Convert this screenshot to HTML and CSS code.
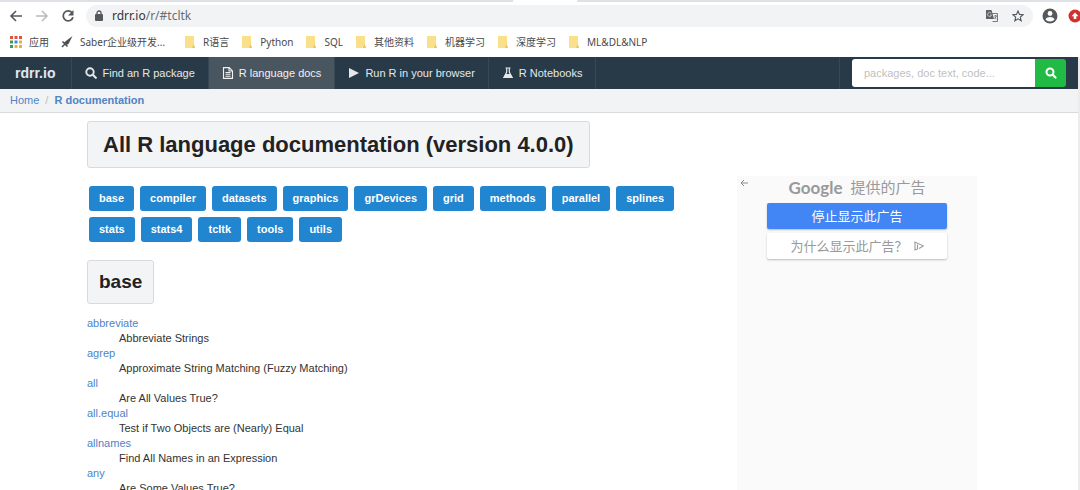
FILE: index.html
```html
<!DOCTYPE html>
<html lang="en">
<head>
<meta charset="utf-8">
<title>All R language documentation</title>
<link rel="stylesheet" href="styles.css">
</head>
<body>
<div class="tabstrip"><span class="tab-active"></span></div>
<div class="toolbar">
  <button class="tool" aria-label="Back"><svg width="16" height="16" viewBox="0 0 16 16"><path d="M14 8H3M8 3L3 8l5 5" fill="none" stroke="#55585c" stroke-width="1.6"/></svg></button>
  <button class="tool" aria-label="Forward"><svg width="16" height="16" viewBox="0 0 16 16"><path d="M2 8h11M8 3l5 5-5 5" fill="none" stroke="#b9bbbe" stroke-width="1.6"/></svg></button>
  <button class="tool" aria-label="Reload"><svg width="16" height="16" viewBox="0 0 16 16"><path d="M12.3 5A5 5 0 1 0 13 9.300" fill="none" stroke="#55585c" stroke-width="1.8"/><path d="M13.500 2v5.500H8z" fill="#55585c"/></svg></button>
  <div class="address">
    <svg width="10" height="12" viewBox="0 0 10 12"><rect x="1" y="4" width="8" height="7" rx="1" fill="#55585c"/><path d="M3 4.500V3a2 2 0 0 1 4 0v1.500" fill="none" stroke="#55585c" stroke-width="1.300"/></svg>
    <span class="url">rdrr.io<span class="path">/r/#tcltk</span></span>
    <svg class="translate" width="12" height="12" viewBox="0 0 12 12"><path d="M5 3.500h6.500v8H6.500" fill="none" stroke="#77797c"/><path d="M0 0h5.500l2.500 9H0z" fill="#5f6368"/><path d="M5.200 3.300A2 2 0 1 0 5.500 5H4" fill="none" stroke="#d5d7da" stroke-width=".8"/><path d="M8 6h3M9.500 5v1M10.500 6L8.500 9M8.700 7.500l1.800 1.500" fill="none" stroke="#66696d" stroke-width=".8"/></svg>
    <svg width="12" height="12" viewBox="0 0 12 12"><path d="M6 1l1.500 3.400 3.600.3-2.800 2.400.9 3.700L6 8.900l-3.200 1.900.9-3.700L.9 4.700l3.600-.3z" fill="none" stroke="#55585c" stroke-width="1.100"/></svg>
  </div>
  <svg class="avatar" width="16" height="16" viewBox="0 0 16 16"><circle cx="8" cy="8" r="7.500" fill="#55585c"/><circle cx="8" cy="5.500" r="2.400" fill="#fff"/><path d="M3.500 11.500c1.600-3.200 7.400-3.200 9 0-2 2.600-7 2.600-9 0z" fill="#fff"/></svg>
  <svg class="update" width="14" height="14" viewBox="0 0 14 14"><circle cx="7" cy="7" r="6.500" fill="#d32f2f"/><path d="M7 3.500l3.500 3.700H8.300V10H5.700V7.200H3.500z" fill="#fff"/></svg>
</div>
<div class="bookmarks">
  <a href="#apps" class="bm apps"><svg width="12" height="12" viewBox="0 0 12 12"><path d="M0 0h3v3H0zM4.500 0h3v3h-3z" fill="#e0533f"/><path d="M9 0h3v3H9z" fill="#e0533f"/><path d="M0 4.500h3v3H0z" fill="#3f9a58"/><path d="M4.500 4.500h3v3h-3z" fill="#4285d8"/><path d="M9 4.500h3v3H9zM4.500 9h3v3h-3zM9 9h3v3H9z" fill="#e7b23b"/><path d="M0 9h3v3H0z" fill="#3f9a58"/></svg>应用</a>
  <a href="#saber" class="bm saber"><svg width="12" height="12" viewBox="0 0 12 12"><path d="M11.500 0L7.500 8 5.500 9 3 6.500z" fill="#4c4f52"/><path d="M1.500 5.500l5 5M4 8l-3 3" stroke="#4c4f52" stroke-width="1.500"/></svg>Saber企业级开发...</a>
  <a href="#r" class="bm"><svg width="12" height="12" viewBox="0 0 12 12"><path d="M1 0h9v9l1 3H1z" fill="#fae08a"/><path d="M9.500 8l1.500 4H8z" fill="#e7c65c"/></svg>R语言</a>
  <a href="#python" class="bm"><svg width="12" height="12" viewBox="0 0 12 12"><path d="M1 0h9v9l1 3H1z" fill="#fae08a"/><path d="M9.500 8l1.500 4H8z" fill="#e7c65c"/></svg>Python</a>
  <a href="#sql" class="bm"><svg width="12" height="12" viewBox="0 0 12 12"><path d="M1 0h9v9l1 3H1z" fill="#fae08a"/><path d="M9.500 8l1.500 4H8z" fill="#e7c65c"/></svg>SQL</a>
  <a href="#other" class="bm"><svg width="12" height="12" viewBox="0 0 12 12"><path d="M1 0h9v9l1 3H1z" fill="#fae08a"/><path d="M9.500 8l1.500 4H8z" fill="#e7c65c"/></svg>其他资料</a>
  <a href="#ml" class="bm"><svg width="12" height="12" viewBox="0 0 12 12"><path d="M1 0h9v9l1 3H1z" fill="#fae08a"/><path d="M9.500 8l1.500 4H8z" fill="#e7c65c"/></svg>机器学习</a>
  <a href="#dl" class="bm"><svg width="12" height="12" viewBox="0 0 12 12"><path d="M1 0h9v9l1 3H1z" fill="#fae08a"/><path d="M9.500 8l1.500 4H8z" fill="#e7c65c"/></svg>深度学习</a>
  <a href="#nlp" class="bm"><svg width="12" height="12" viewBox="0 0 12 12"><path d="M1 0h9v9l1 3H1z" fill="#fae08a"/><path d="M9.500 8l1.500 4H8z" fill="#e7c65c"/></svg>ML&amp;DL&amp;NLP</a>
</div>
<div class="page">
  <nav class="menu">
    <a class="item brand" href="#home">rdrr.io</a>
    <a class="item" href="#find"><svg width="12" height="12" viewBox="0 0 12 12"><circle cx="5" cy="5" r="3.700" fill="none" stroke="currentColor" stroke-width="1.900"/><path d="M7.800 7.800l3 3" stroke="currentColor" stroke-width="2.200" stroke-linecap="round"/></svg>Find an R package</a>
    <a class="item active" href="#docs"><svg width="12" height="12" viewBox="0 0 12 12"><path d="M1.500.6h5.700l3.300 3.300v7.500h-9zM7 .6V4h3.500M3.500 5.500h5M3.500 7.300h5M3.500 9.200h5" fill="none" stroke="currentColor" stroke-width="1.100"/></svg>R language docs</a>
    <a class="item" href="#run"><svg width="12" height="12" viewBox="0 0 12 12"><path d="M1 1l10 5-10 5z" fill="currentColor"/></svg>Run R in your browser</a>
    <a class="item" href="#notebooks"><svg width="12" height="12" viewBox="0 0 12 12"><path d="M3.500 1h5M4.700 1v4L2 10.500h8L7.300 5V1" fill="none" stroke="currentColor" stroke-width="1.200"/><path d="M3.500 7h5l2.500 4H1z" fill="currentColor"/></svg>R Notebooks</a>
    <form class="search">
      <input type="search" aria-label="Search" placeholder="packages, doc text, code...">
      <button type="button" aria-label="Search"><svg width="12" height="12" viewBox="0 0 12 12"><circle cx="5" cy="5" r="3.500" fill="none" stroke="#fff" stroke-width="2"/><path d="M7.800 7.800l2.700 2.700" stroke="#fff" stroke-width="2.200" stroke-linecap="round"/></svg></button>
    </form>
  </nav>
  <div class="crumbs"><a href="#home">Home</a><span>/</span><a class="current" href="#docs">R documentation</a></div>
  <div class="container">
    <main>
      <h1>All R language documentation (version 4.0.0)</h1>
      <div class="tags">
        <a href="#base">base</a><a href="#compiler">compiler</a><a href="#datasets">datasets</a><a href="#graphics">graphics</a><a href="#grDevices">grDevices</a><a href="#grid">grid</a><a href="#methods">methods</a><a href="#parallel">parallel</a><a href="#splines">splines</a><a href="#stats">stats</a><a href="#stats4">stats4</a><a href="#tcltk">tcltk</a><a href="#tools">tools</a><a href="#utils">utils</a>
      </div>
      <h2 id="base">base</h2>
      <dl>
        <dt><a href="#abbreviate">abbreviate</a></dt><dd>Abbreviate Strings</dd>
        <dt><a href="#agrep">agrep</a></dt><dd>Approximate String Matching (Fuzzy Matching)</dd>
        <dt><a href="#all">all</a></dt><dd>Are All Values True?</dd>
        <dt><a href="#all.equal">all.equal</a></dt><dd>Test if Two Objects are (Nearly) Equal</dd>
        <dt><a href="#allnames">allnames</a></dt><dd>Find All Names in an Expression</dd>
        <dt><a href="#any">any</a></dt><dd>Are Some Values True?</dd>
      </dl>
    </main>
    <aside>
      <button class="ad-back" aria-label="Back"><svg width="8" height="8" viewBox="0 0 8 8"><path d="M8 4H1M4 1L1 4l3 3" fill="none" stroke="#8c8c8c"/></svg></button>
      <p class="ad-title"><b>Google</b>提供的广告</p>
      <button class="ad-btn stop">停止显示此广告</button>
      <button class="ad-btn why">为什么显示此广告？<svg width="10" height="10" viewBox="0 0 10 10"><path d="M3.500 8L1 9V1l8.500 4-4.500 2.500M3.500 8V3.500" fill="none" stroke="#999" stroke-width="1.100"/></svg></button>
    </aside>
  </div>
</div>
</body>
</html>
```
FILE: styles.css
```css
* { box-sizing: border-box; }
body {
  margin: 0;
  height: 100vh;
  overflow: hidden;
  display: flex;
  flex-direction: column;
  background: #fff;
  color: #333;
  font: 11px/15px "Liberation Sans", Arial, "Noto Sans CJK SC", sans-serif;
}
a { color: #4f83c4; text-decoration: none; }
button { border: 0; padding: 0; background: none; font: inherit; }
svg { display: block; flex: none; }

.tabstrip { height: 2px; flex: none; background: #dee1e6; padding-left: 47.5%; }
.tab-active { display: block; width: 64px; height: 2px; background: #fff; }
.toolbar { flex: none; height: 28px; display: flex; align-items: center; padding-left: 8px; gap: 10px; }
.address {
  flex: 1;
  height: 22px;
  display: flex;
  align-items: center;
  gap: 8px;
  padding: 0 9px 0 8px;
  border-radius: 11px;
  background: #f1f3f4;
}
.url { flex: 1; color: #333639; font: 12px/16px "Noto Sans", sans-serif; }
.path { color: #6b6e72; }
.translate { margin-right: 6px; }
.avatar { margin-left: -1px; }
.update { margin-right: -2px; }

.bookmarks {
  flex: none;
  height: 27px;
  display: flex;
  align-items: center;
  gap: 12px;
  padding: 0 10px 3px;
  white-space: nowrap;
}
.bm { display: flex; align-items: center; gap: 7px; color: #47494c; font: 10px/14px "Noto Sans", "Noto Sans CJK SC", sans-serif; }
.saber { margin-right: 7px; }

.page { flex: 1; min-height: 0; overflow: hidden; border-right: 2px solid #ececec; }
.menu { display: flex; height: 32px; background: #283a48; }
.item {
  display: flex;
  align-items: center;
  gap: 5px;
  padding: 0 13px;
  border-right: 1px solid #364856;
  color: #e4e8ea;
  font-size: 11px;
  white-space: nowrap;
}
.brand { padding: 0 16px 0 15px; font-size: 14px; font-weight: bold; }
.active { background: #4a565f; color: #f0f2f3; }
.search {
  margin-left: auto;
  display: flex;
  align-items: center;
  padding: 0 12px;
  border-left: 1px solid #364856;
}
.search input {
  width: 183px;
  height: 28px;
  border: 0;
  border-radius: 3px 0 0 3px;
  padding: 0 12px;
  background: #fff;
  font: 11px/15px "Liberation Sans", Arial, sans-serif;
}
.search input::placeholder { color: #bfbfbf; }
.search button {
  width: 31px;
  height: 28px;
  display: flex;
  align-items: center;
  justify-content: center;
  border-radius: 0 3px 3px 0;
  background: #21ba45;
}
.crumbs { display: flex; gap: 6px; padding: 4px 10px; background: #f2f3f5; border-bottom: 1px solid #d9dadc; }
.crumbs span { color: #bbb; }
.current { font-weight: bold; }

.container {
  max-width: 904px;
  margin: 0 auto;
  padding: 8px 14px 0 0;
  display: grid;
  grid-template-columns: minmax(0, 1fr) 240px;
  gap: 56px;
}
h1, h2 {
  width: fit-content;
  margin: 0;
  padding: 9px 11px;
  border: 1px solid #d8dadd;
  border-radius: 3px;
  background: #f3f4f5;
  color: #222;
}
h1 { padding: 9px 15px; font-size: 22px; line-height: 27px; }
h2 { font-size: 19px; line-height: 24px; }
.tags { display: flex; flex-wrap: wrap; gap: 6px; padding: 18px 2px; }
.tags a {
  padding: 5px 10px;
  border-radius: 3px;
  background: #2185d0;
  color: #fff;
  font-weight: bold;
}
dl { margin: 12px 0 0; }
dd { margin: 0 0 0 32px; }

aside {
  position: relative;
  margin-top: 55px;
  min-height: 320px;
  display: flex;
  flex-direction: column;
  align-items: center;
  gap: 4px;
  background: #fafafa;
}
.ad-back { position: absolute; left: 3px; top: 3px; }
.ad-title {
  margin: 0;
  display: flex;
  gap: 8px;
  color: #999;
  font: 15px/23px Lato, "Noto Sans CJK SC", sans-serif;
}
.ad-title b { font-size: 17px; }
.ad-btn {
  width: 180px;
  height: 26px;
  display: flex;
  align-items: center;
  justify-content: center;
  gap: 6px;
  border-radius: 2px;
  box-shadow: 0 1px 2px #bbb;
  font: 13px/18px "Noto Sans CJK SC", sans-serif;
}
.stop { background: #4285f4; color: #fff; }
.why { background: #fff; color: #999; }
```
